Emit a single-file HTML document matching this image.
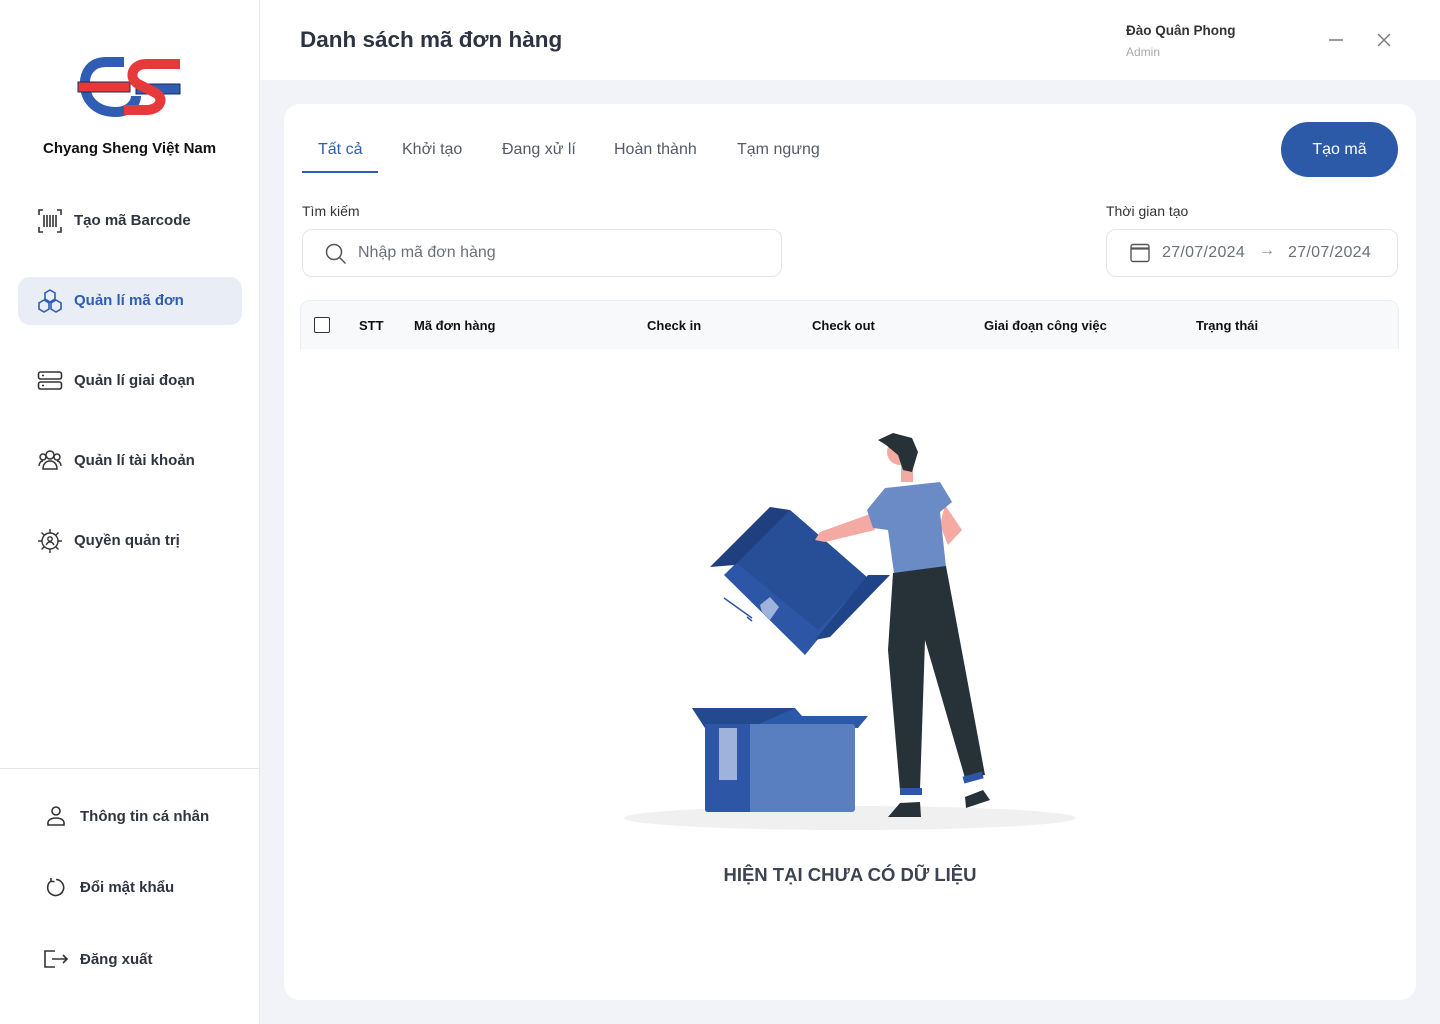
<!DOCTYPE html>
<html><head><meta charset="utf-8"><style>
*{margin:0;padding:0;box-sizing:border-box}
body{width:1440px;height:1024px;overflow:hidden;background:#f2f3f8;font-family:"Liberation Sans",sans-serif;color:#2b2f36;position:relative}
.a{position:absolute;white-space:nowrap}
.side{position:absolute;left:0;top:0;width:260px;height:1024px;background:#fff;border-right:1px solid #e6e7eb}
.nav{font-size:15px;font-weight:bold;color:#2f3440}
.th{font-size:13px;font-weight:bold;color:#111}
svg{position:absolute}
</style></head><body>
<div class="side">
<svg style="left:76px;top:56px" width="108" height="62" viewBox="0 0 108 62">
<path d="M48 6 H30 C14 6 8 18 9 30 C10 46 22 56 40 56 C52 56 60 48 60 40" fill="none" stroke="#2f5db3" stroke-width="10"/>
<rect x="60" y="28" width="44" height="10" fill="#2f5db3" stroke="#1a2a55" stroke-width="1"/>
<rect x="2" y="26" width="52" height="10" fill="#e63a3a" stroke="#1a2a55" stroke-width="1"/>
<path d="M104 8 H70 C56 8 52 22 62 28 L78 36 C90 42 84 54 70 54 H48" fill="none" stroke="#e63a3a" stroke-width="10"/>
</svg>
<div class="a" style="left:43px;top:140px;font-size:15px;font-weight:bold;color:#111">Chyang Sheng Việt Nam</div>

<svg style="left:37px;top:208px" width="26" height="26" viewBox="0 0 26 26" fill="none" stroke="#333" stroke-width="1.6"><path d="M2 7V2h4M20 2h4v5M2 19v5h4M20 24h4v-5M7 7v12M10 7v12M13 7v12M16 7v12M19 7v12"/></svg>
<div class="a nav" style="left:74px;top:212px">Tạo mã Barcode</div>

<div class="a" style="left:18px;top:277px;width:224px;height:48px;border-radius:12px;background:#e8edf6"></div>
<svg style="left:37px;top:288px" width="26" height="26" viewBox="0 0 26 26" fill="none" stroke="#2f5db3" stroke-width="1.6"><path d="M13 2l5 3v6l-5 3-5-3V5zM7 12l5 3v6l-5 3-5-3v-6zM19 12l5 3v6l-5 3-5-3v-6z"/></svg>
<div class="a nav" style="left:74px;top:292px;color:#2f5db3">Quản lí mã đơn</div>

<svg style="left:37px;top:369px" width="26" height="24" viewBox="0 0 26 24" fill="none" stroke="#333" stroke-width="1.6"><rect x="1.5" y="3" width="23" height="7" rx="2"/><rect x="1.5" y="13" width="23" height="7" rx="2"/><path d="M5 6.5h2M5 16.5h2"/></svg>
<div class="a nav" style="left:74px;top:372px">Quản lí giai đoạn</div>

<svg style="left:37px;top:448px" width="26" height="24" viewBox="0 0 26 24" fill="none" stroke="#333" stroke-width="1.5"><circle cx="13" cy="7" r="4"/><circle cx="6" cy="9" r="3"/><circle cx="20" cy="9" r="3"/><path d="M6 21c0-5 3-8 7-8s7 3 7 8zM2 18c0-3 2-5 4-5M24 18c0-3-2-5-4-5"/></svg>
<div class="a nav" style="left:74px;top:452px">Quản lí tài khoản</div>

<svg style="left:37px;top:528px" width="26" height="26" viewBox="0 0 26 26" fill="none" stroke="#333" stroke-width="1.4"><circle cx="13" cy="13" r="8"/><path d="M13 1v4M13 21v4M1 13h4M21 13h4M4.5 4.5l3 3M18.5 18.5l3 3M4.5 21.5l3-3M18.5 7.5l3-3"/><circle cx="13" cy="11" r="2.2"/><path d="M9 17c1-2 2.5-3 4-3s3 1 4 3"/></svg>
<div class="a nav" style="left:74px;top:532px">Quyền quản trị</div>

<div class="a" style="left:0;top:768px;width:259px;height:1px;background:#e6e7eb"></div>
<svg style="left:45px;top:805px" width="22" height="22" viewBox="0 0 22 22" fill="none" stroke="#333" stroke-width="1.6"><circle cx="11" cy="6" r="4"/><path d="M3 20v-2c0-3 3-5 8-5s8 2 8 5v2z"/></svg>
<div class="a nav" style="left:80px;top:808px">Thông tin cá nhân</div>
<svg style="left:45px;top:876px" width="22" height="22" viewBox="0 0 22 22" fill="none" stroke="#333" stroke-width="1.6"><path d="M6 5a8 8 0 1 0 5-1.5M6 2v3.5h3.5"/></svg>
<div class="a nav" style="left:80px;top:879px">Đổi mật khẩu</div>
<svg style="left:43px;top:948px" width="26" height="22" viewBox="0 0 26 22" fill="none" stroke="#333" stroke-width="1.6"><path d="M12 3H2v16h10M9 11h15M20 7l4 4-4 4"/></svg>
<div class="a nav" style="left:80px;top:951px">Đăng xuất</div>
</div>

<div class="a" style="left:260px;top:0;width:1180px;height:80px;background:#fff"></div>
<div class="a" style="left:300px;top:27px;font-size:22.5px;font-weight:bold;color:#2d3340">Danh sách mã đơn hàng</div>
<div class="a" style="left:1126px;top:23px;font-size:13.5px;font-weight:bold;color:#333">Đào Quân Phong</div>
<div class="a" style="left:1126px;top:45px;font-size:12px;color:#aaa">Admin</div>
<div class="a" style="left:1329px;top:39px;width:14px;height:1.5px;background:#999"></div>
<svg style="left:1377px;top:33px" width="14" height="14" viewBox="0 0 14 14" stroke="#777" stroke-width="1.3"><path d="M1 1l12 12M13 1L1 13"/></svg>

<div class="a" style="left:284px;top:104px;width:1132px;height:896px;background:#fff;border-radius:16px"></div>
<div class="a" style="left:318px;top:141px;font-size:16px;color:#2f5db3">Tất cả</div>
<div class="a" style="left:302px;top:171px;width:76px;height:2px;background:#2f5db3"></div>
<div class="a" style="left:402px;top:141px;font-size:16px;color:#555b66">Khởi tạo</div>
<div class="a" style="left:502px;top:141px;font-size:16px;color:#555b66">Đang xử lí</div>
<div class="a" style="left:614px;top:141px;font-size:16px;color:#555b66">Hoàn thành</div>
<div class="a" style="left:737px;top:141px;font-size:16px;color:#555b66">Tạm ngưng</div>
<div class="a" style="left:1281px;top:122px;width:117px;height:55px;border-radius:28px;background:#2c5aa8;color:#fff;font-size:16px;text-align:center;line-height:55px">Tạo mã</div>

<div class="a" style="left:302px;top:203px;font-size:14px;color:#333">Tìm kiếm</div>
<div class="a" style="left:302px;top:229px;width:480px;height:48px;border:1px solid #e3e5ea;border-radius:10px"></div>
<svg style="left:324px;top:242px" width="24" height="24" viewBox="0 0 24 24" fill="none" stroke="#555" stroke-width="1.5"><circle cx="10" cy="10" r="7.5"/><path d="M15.5 15.5l6 6"/></svg>
<div class="a" style="left:358px;top:244px;font-size:16px;color:#6b7079">Nhập mã đơn hàng</div>

<div class="a" style="left:1106px;top:203px;font-size:14px;color:#333">Thời gian tạo</div>
<div class="a" style="left:1106px;top:229px;width:292px;height:48px;border:1px solid #e3e5ea;border-radius:10px"></div>
<svg style="left:1129px;top:242px" width="22" height="22" viewBox="0 0 22 22" fill="none" stroke="#555" stroke-width="1.4"><rect x="2" y="2.5" width="18" height="17" rx="2"/><path d="M2 6.5h18" stroke-width="2.2"/></svg>
<div class="a" style="left:1162px;top:244px;font-size:16px;color:#6b7079;letter-spacing:0.3px">27/07/2024</div>
<div class="a" style="left:1259px;top:242px;font-size:16px;color:#888">→</div>
<div class="a" style="left:1288px;top:244px;font-size:16px;color:#6b7079;letter-spacing:0.3px">27/07/2024</div>

<div class="a" style="left:300px;top:300px;width:1099px;height:49px;background:#f8f9fb;border:1px solid #eceef2;border-bottom:none;border-radius:10px 10px 0 0"></div>
<div class="a" style="left:314px;top:317px;width:16px;height:16px;border:1.5px solid #333;border-radius:2px;background:#fff"></div>
<div class="a th" style="left:359px;top:318px">STT</div>
<div class="a th" style="left:414px;top:318px">Mã đơn hàng</div>
<div class="a th" style="left:647px;top:318px">Check in</div>
<div class="a th" style="left:812px;top:318px">Check out</div>
<div class="a th" style="left:984px;top:318px">Giai đoạn công việc</div>
<div class="a th" style="left:1196px;top:318px">Trạng thái</div>

<svg style="left:0;top:0" width="1440" height="1024" viewBox="0 0 1440 1024">
<ellipse cx="850" cy="818" rx="226" ry="12" fill="#f0f0f0"/>
<polygon points="692,708 795,708 802,716 868,716 858,728 705,728" fill="#2b58a8"/>
<polygon points="692,708 795,708 750,728 705,728" fill="#234a8e"/>
<rect x="705" y="724" width="150" height="88" rx="3" fill="#5a7fc0"/>
<path d="M705 724 H750 V812 H708 Q705 812 705 809Z" fill="#2d56a6"/>
<rect x="719" y="728" width="18" height="52" fill="#9fb2dc"/>
<polygon points="724,575 790,510 868,578 805,655" fill="#2d56a6"/>
<polygon points="733,560 790,510 868,578 818,630" fill="#264f98"/>
<polygon points="710,567 770,507 790,510 735,565" fill="#1f3f7e"/>
<polygon points="868,575 890,575 830,637 815,640" fill="#1f4488"/>
<polygon points="760,605 770,597 779,607 770,620 762,612" fill="#9fb2dc"/>
<path d="M724 598l28 20M747 617l5 4" stroke="#2d56a6" stroke-width="1.5"/>
<path d="M870 514 L820 532 L815 540 L825 542 L875 530Z" fill="#f4a9a3"/>
<path d="M945 505 L962 530 L948 545 L940 525Z" fill="#f4a9a3"/>
<circle cx="900" cy="452" r="13" fill="#f4a9a3"/>
<rect x="901" y="462" width="12" height="20" fill="#f4a9a3"/>
<path d="M878 440 L893 433 L912 438 L918 452 L912 472 L903 470 L898 455 L886 445Z" fill="#263238"/>
<polygon points="867,510 885,488 940,482 952,502 940,512 946,567 894,573 888,530 873,528" fill="#6a8bc6"/>
<polygon points="893,573 946,566 985,775 965,778 925,640 920,790 900,790 888,650" fill="#263238"/>
<rect x="900" y="788" width="22" height="7" fill="#2d56a6"/>
<rect x="963" y="774" width="20" height="7" fill="#2d56a6" transform="rotate(-15 973 777)"/>
<path d="M900 803 L920 802 L921 817 L888 817 Z" fill="#263238"/>
<path d="M965 797 L983 790 L990 800 L966 808Z" fill="#263238"/>
</svg>

<div class="a" style="left:0;width:1700px;top:864px;text-align:center;font-size:18.5px;font-weight:bold;color:#3c4452">HIỆN TẠI CHƯA CÓ DỮ LIỆU</div>
</body></html>
